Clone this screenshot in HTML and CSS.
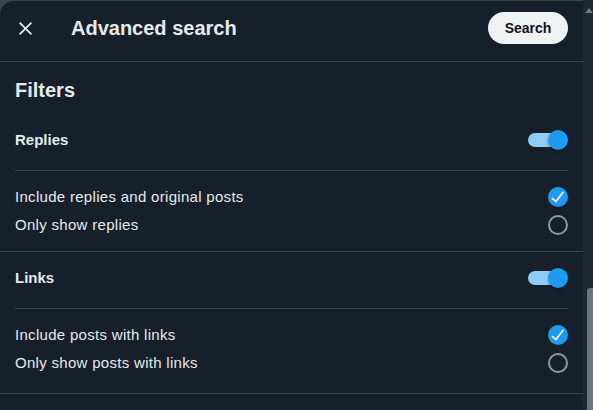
FILE: index.html
```html
<!DOCTYPE html>
<html lang="en">
<head>
    <meta charset="UTF-8">
    <meta name="viewport" content="width=device-width, initial-scale=1.0">
    <title>Advanced search</title>
    <link rel="stylesheet" href="styles.css">
</head>
<body>
    <div class="wrap">
        <div class="panel">
            <div class="header">
                <button class="close" aria-label="Close">
                    <svg viewBox="0 0 24 24" width="21" height="21"><path d="M10.59 12L4.54 5.96l1.42-1.42L12 10.59l6.04-6.05 1.42 1.42L13.41 12l6.05 6.04-1.42 1.42L12 13.41l-6.04 6.05-1.42-1.42L10.59 12z" fill="#e7e9ea"/></svg>
                </button>
                <h1 class="title">Advanced search</h1>
                <button class="search-btn">Search</button>
            </div>

            <h2 class="filters">Filters</h2>

            <div class="section-head">
                <span class="label">Replies</span>
                <span class="toggle"><span class="track"></span><span class="knob"></span></span>
            </div>
            <div class="divider"></div>
            <div class="options">
                <div class="option">
                    <span class="label">Include replies and original posts</span>
                    <svg class="check" viewBox="0 0 24 24" width="20" height="20"><circle cx="12" cy="12" r="12" fill="#1d9bf0"/><path d="M9.64 18.952l-5.55-4.861 1.317-1.504 3.951 3.459 8.5-10.948L19.24 6.32 9.64 18.952z" fill="#fff"/></svg>
                </div>
                <div class="option">
                    <span class="label">Only show replies</span>
                    <span class="radio"></span>
                </div>
            </div>

            <div class="full-divider"></div>

            <div class="section-head">
                <span class="label">Links</span>
                <span class="toggle"><span class="track"></span><span class="knob"></span></span>
            </div>
            <div class="divider"></div>
            <div class="options options-last">
                <div class="option">
                    <span class="label">Include posts with links</span>
                    <svg class="check" viewBox="0 0 24 24" width="20" height="20"><circle cx="12" cy="12" r="12" fill="#1d9bf0"/><path d="M9.64 18.952l-5.55-4.861 1.317-1.504 3.951 3.459 8.5-10.948L19.24 6.32 9.64 18.952z" fill="#fff"/></svg>
                </div>
                <div class="option">
                    <span class="label">Only show posts with links</span>
                    <span class="radio"></span>
                </div>
            </div>

            <div class="full-divider"></div>
        </div>

        <div class="scrollbar">
            <span class="arrow"></span>
            <span class="thumb"></span>
        </div>
    </div>
</body>
</html>
```

FILE: styles.css
```css
body { margin: 0; background-color: #3a4652; font-family: "Liberation Sans", Arial, sans-serif; color: #e7e9ea; overflow: hidden; }
.wrap { display: flex; width: 593px; height: 410px; }
.panel { width: 583px; margin-top: 1px; background-color: #15202b; border-top-left-radius: 14px; }
.header { display: flex; align-items: flex-start; height: 49px; padding: 11px 15px 0 8px; border-bottom: 1px solid #38444d; }
.close { width: 34px; height: 32px; padding: 0; border: none; background: none; display: flex; align-items: center; justify-content: center; }
.title { margin: 0 0 0 29px; flex: 1; font-size: 20px; line-height: 32px; font-weight: bold; }
.search-btn { height: 32px; width: 80px; padding: 0; border: none; border-radius: 16px; background-color: #eff3f4; color: #0f1419; font-family: inherit; font-size: 14px; font-weight: bold; }
.filters { margin: 0; padding: 16px 15px 12px; font-size: 20px; line-height: 24px; font-weight: bold; }
.section-head { display: flex; align-items: center; justify-content: space-between; height: 52px; padding: 0 15px 4px; font-size: 15px; font-weight: bold; }
.label { padding-bottom: 2px; }
.toggle { position: relative; width: 40px; height: 20px; display: flex; align-items: center; }
.track { width: 34px; height: 14px; border-radius: 7px; background-color: #8ecdf8; }
.knob { position: absolute; right: 0; top: 0; width: 20px; height: 20px; border-radius: 50%; background-color: #1d9bf0; box-shadow: 0 1px 3px rgba(0,0,0,0.35); }
.divider { height: 1px; margin: 0 15px; background-color: #38444d; }
.full-divider { height: 1px; background-color: #38444d; }
.options { padding: 12px 15px; }
.options-last { padding-bottom: 16px; }
.option { display: flex; align-items: center; justify-content: space-between; height: 28px; font-size: 15px; letter-spacing: 0.3px; }
.check { display: block; }
.radio { width: 16px; height: 16px; border: 2px solid #8b98a5; border-radius: 50%; }
.scrollbar { position: relative; width: 10px; background-color: #1e2832; }
.arrow { position: absolute; top: 8px; right: 0; width: 0; height: 0; border-left: 4px solid transparent; border-right: 4px solid transparent; border-bottom: 5px solid #6f7a84; }
.thumb { position: absolute; top: 288px; right: 0; width: 6px; height: 122px; border-top-left-radius: 3px; background-color: #68737d; }
```
